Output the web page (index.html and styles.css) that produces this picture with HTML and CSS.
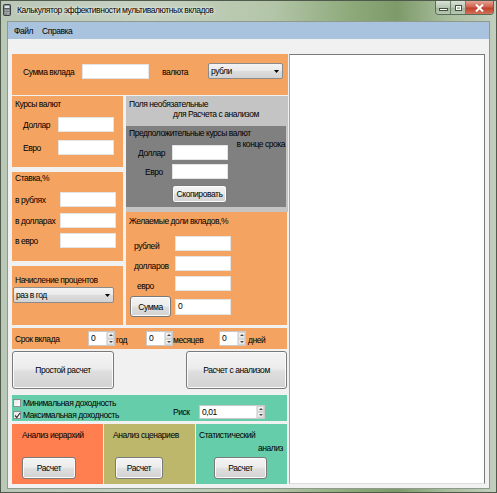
FILE: index.html
```html
<!DOCTYPE html>
<html lang="ru">
<head>
<meta charset="utf-8">
<title>Калькулятор эффективности мультивалютных вкладов</title>
<link rel="stylesheet" href="styles.css">
</head>
<body>
<div class="window">
  <div class="titlebar">
    <svg class="app-icon" width="8" height="12" viewBox="0 0 8 12">
      <rect x="0.5" y="0.5" width="7" height="11" rx="1" fill="#5b5f63" stroke="#3b3e41"/>
      <rect x="1.5" y="1.5" width="5" height="2.5" fill="#d9e2e6"/>
      <rect x="1.5" y="5.5" width="1.2" height="1.2" fill="#e8e8e8"/>
      <rect x="3.4" y="5.5" width="1.2" height="1.2" fill="#e8e8e8"/>
      <rect x="5.3" y="5.5" width="1.2" height="1.2" fill="#e8e8e8"/>
      <rect x="1.5" y="7.6" width="1.2" height="1.2" fill="#e8e8e8"/>
      <rect x="3.4" y="7.6" width="1.2" height="1.2" fill="#e8e8e8"/>
      <rect x="5.3" y="7.6" width="1.2" height="1.2" fill="#e8e8e8"/>
      <rect x="1.5" y="9.5" width="1.2" height="1" fill="#e8e8e8"/>
      <rect x="3.4" y="9.5" width="3.1" height="1" fill="#e8e8e8"/>
    </svg>
    <span class="title">Калькулятор эффективности мультивалютных вкладов</span>
    <div class="caption">
      <span class="cap-btn cap-min"><i></i></span>
      <span class="cap-btn cap-max"><i></i></span>
      <span class="cap-btn cap-close">
        <svg width="9" height="8" viewBox="0 0 9 8"><path d="M1 0.5 L8 7.5 M8 0.5 L1 7.5" stroke="#fff" stroke-width="2"/></svg>
      </span>
    </div>
  </div>
  <div class="frame">
    <div class="client">
      <div class="menubar">
        <span class="menu-item">Файл</span>
        <span class="menu-item">Справка</span>
      </div>
      <div class="content">
        <div class="left">
          <div class="panel sum-panel">
            <span class="lbl sum-lbl">Сумма вклада</span>
            <span class="tb sum-tb"></span>
            <span class="lbl cur-lbl">валюта</span>
            <span class="combo cur-combo">рубли<svg class="arrow" width="5" height="3" viewBox="0 0 5 3"><path d="M0 0H5L2.5 3Z" fill="#000"/></svg></span>
          </div>

          <div class="middle">
            <div class="col-a">
              <div class="panel kursy">
                <div class="ptitle">Курсы валют</div>
                <div class="row kursy-row first"><span class="lbl">Доллар</span><span class="tb w56"></span></div>
                <div class="row kursy-row"><span class="lbl">Евро</span><span class="tb w56"></span></div>
              </div>
              <div class="panel stavka">
                <div class="ptitle">Ставка,%</div>
                <div class="row stavka-row r1"><span class="lbl">в рублях</span><span class="tb w56"></span></div>
                <div class="row stavka-row r2"><span class="lbl">в долларах</span><span class="tb w56"></span></div>
                <div class="row stavka-row r3"><span class="lbl">в евро</span><span class="tb w56"></span></div>
              </div>
              <div class="panel nachisl">
                <div class="ptitle">Начисление процентов</div>
                <span class="combo nach-combo">раз в год<svg class="arrow" width="5" height="3" viewBox="0 0 5 3"><path d="M0 0H5L2.5 3Z" fill="#000"/></svg></span>
              </div>
            </div>
            <div class="col-b">
              <div class="optional">
                <div class="ptitle">Поля необязательные</div>
                <div class="ptitle opt-line2">для Расчета с анализом</div>
                <div class="dark">
                  <div class="ptitle">Предположительные курсы валют</div>
                  <div class="corner">в конце срока</div>
                  <div class="row dark-row"><span class="lbl dl-usd">Доллар</span><span class="tb w56"></span></div>
                  <div class="row dark-row r2"><span class="lbl dl-eur">Евро</span><span class="tb w56"></span></div>
                  <span class="btn copy-btn">Скопировать</span>
                </div>
              </div>
              <div class="panel shares">
                <div class="ptitle">Желаемые доли вкладов,%</div>
                <div class="row share-row first"><span class="lbl">рублей</span><span class="tb w56"></span></div>
                <div class="row share-row"><span class="lbl">долларов</span><span class="tb w56"></span></div>
                <div class="row share-row"><span class="lbl evro">евро</span><span class="tb w56"></span></div>
                <div class="row sum-row"><span class="btn sum-btn">Сумма</span><span class="tb w56 total">0</span></div>
              </div>
            </div>
          </div>

          <div class="panel srok">
            <span class="lbl srok-lbl">Срок вклада</span>
            <span class="nud n-small"><span class="val">0</span><span class="spin"><i class="up"></i><i class="down"></i></span></span>
            <span class="lbl god">год</span>
            <span class="nud n-small"><span class="val">0</span><span class="spin"><i class="up"></i><i class="down"></i></span></span>
            <span class="lbl mes">месяцев</span>
            <span class="nud n-small"><span class="val">0</span><span class="spin"><i class="up"></i><i class="down"></i></span></span>
            <span class="lbl dney">дней</span>
          </div>

          <div class="calc-row">
            <span class="btn big-btn b1">Простой расчет</span>
            <span class="btn big-btn b2">Расчет с анализом</span>
          </div>

          <div class="panel risk">
            <div class="checks">
              <div class="check-row"><span class="cb"></span><span class="lbl">Минимальная доходность</span></div>
              <div class="check-row"><span class="cb checked"><svg width="7" height="7" viewBox="0 0 7 7"><path d="M1 3.5 L2.8 5.5 L6 1" fill="none" stroke="#333" stroke-width="1.2"/></svg></span><span class="lbl">Максимальная доходность</span></div>
            </div>
            <div class="risk-ctl">
              <span class="lbl risk-lbl">Риск</span>
              <span class="nud n-risk"><span class="val">0,01</span><span class="spin"><i class="up"></i><i class="down"></i></span></span>
            </div>
          </div>

          <div class="methods">
            <div class="panel method coral">
              <div class="ptitle">Анализ иерархий</div>
              <span class="btn m-btn">Расчет</span>
            </div>
            <div class="panel method khaki">
              <div class="ptitle">Анализ сценариев</div>
              <span class="btn m-btn">Расчет</span>
            </div>
            <div class="panel method aqua">
              <div class="ptitle">Статистический</div>
              <div class="ptitle right">анализ</div>
              <span class="btn m-btn">Расчет</span>
            </div>
          </div>
        </div>
        <div class="output"></div>
      </div>
    </div>
  </div>
</div>
</body>
</html>
```

FILE: styles.css
```css
* { box-sizing: border-box; }

body {
  margin: 0;
  background: #ffffff;
  font-family: "Liberation Sans Narrow", "Liberation Sans", Arial, sans-serif;
  font-size: 8.5px;
  letter-spacing: -0.45px;
  color: #000;
}

.window {
  width: 497px;
  height: 493px;
  display: flex;
  flex-direction: column;
  overflow: hidden;
  border: 1px solid #4f5a4c;
  background: linear-gradient(90deg, #b9c7b6 0%, #c6d2c2 30%, #b3c5a8 55%, #8fab7c 70%, #7d9a69 80%, #a8bd9c 90%, #c2cebe 100%);
}

.titlebar {
  height: 19px;
  display: flex;
  align-items: flex-start;
  flex: none;
}

.app-icon { margin: 3px 0 0 2px; flex: none; }

.title {
  margin: 4px 0 0 6px;
  font-size: 8.5px;
  letter-spacing: -0.45px;
  line-height: 10px;
  white-space: nowrap;
  text-shadow: 0 0 4px rgba(255,255,255,0.9), 0 0 2px rgba(255,255,255,0.8);
}

.caption {
  margin-left: auto;
  margin-right: 2px;
  display: flex;
  height: 14px;
  border: 1px solid #5b6d5a;
  border-top: none;
  border-radius: 0 0 4px 4px;
  overflow: hidden;
}

.cap-btn {
  display: flex;
  align-items: center;
  justify-content: center;
  height: 100%;
}

.cap-min, .cap-max {
  width: 15px;
  background: linear-gradient(#d8e2d6, #b6c6b2 50%, #9eb39a 51%, #b7c8b2);
  border-right: 1px solid #6d7f6b;
}

.cap-min i {
  display: block;
  width: 7px;
  height: 1px;
  margin-top: 4px;
  background: #fff;
  border: 1px solid #44523f;
  box-sizing: content-box;
}

.cap-max i {
  display: block;
  width: 7px;
  height: 6px;
  border: 1px solid #44523f;
  box-shadow: inset 0 0 0 1px #fff;
}

.cap-close {
  width: 27px;
  background: linear-gradient(#e4a394, #d0634f 45%, #c2412b 55%, #d2735a);
}

.frame {
  flex: 1;
  display: flex;
  padding: 1px 6px 5px 6px;
}

.client {
  flex: 1;
  display: flex;
  flex-direction: column;
  background: #f1f1f1;
  border: 1px solid #8e9a8c;
}

.menubar {
  height: 17px;
  flex: none;
  background: #a9c2dd;
  display: flex;
  align-items: center;
  padding-left: 6px;
  gap: 9px;
}

.menu-item { line-height: 10px; }

.content {
  flex: 1;
  display: flex;
  gap: 1px;
  padding: 15px 4px 4px 4px;
}

.left {
  width: 276px;
  flex: none;
  display: flex;
  flex-direction: column;
}

.output {
  width: 196px;
  height: 430px;
  flex: none;
  background: #fff;
  border: 1px solid #7b7b7b;
  border-left-color: #a5a5a5;
  border-bottom-color: #dedede;
}

/* generic */
.panel { background: #f4a460; }
.lbl { line-height: 10px; white-space: nowrap; }
.ptitle { line-height: 10px; white-space: nowrap; }
.row { display: flex; align-items: center; }

.tb {
  display: block;
  height: 15px;
  background: #fff;
  border: 1px solid #e4e4e4;
  line-height: 13px;
  padding-left: 2px;
  flex: none;
}
.w56 { width: 56px; }

.combo {
  display: flex;
  align-items: center;
  justify-content: space-between;
  height: 16px;
  padding: 0 3px 0 2px;
  background: linear-gradient(#f3f3f3, #e9e9e9 50%, #dcdcdc 51%, #d3d3d3);
  border: 1px solid #8b8b8b;
  border-radius: 2px;
  line-height: 10px;
  flex: none;
}
.arrow { flex: none; }

.btn {
  display: flex;
  align-items: center;
  justify-content: center;
  line-height: 10px;
  background: linear-gradient(#f4f4f4, #ececec 45%, #dedede 55%, #d2d2d2);
  border: 1px solid #7a7a7a;
  border-radius: 3px;
  box-shadow: inset 0 0 0 1px #fbfbfb;
  white-space: nowrap;
  flex: none;
}

.nud {
  display: flex;
  height: 15px;
  background: #fff;
  border: 1px solid #c9c9c9;
  flex: none;
}
.nud .val { flex: 1; line-height: 13px; padding-left: 2px; }
.nud .spin {
  width: 8px;
  display: flex;
  flex-direction: column;
  border-left: 1px solid #e2e2e2;
}
.nud .spin i {
  flex: 1;
  display: flex;
  align-items: center;
  justify-content: center;
  background: linear-gradient(#f6f6f6, #e4e4e4);
  border: 1px solid #d4d4d4;
}
.nud .spin i::before {
  content: "";
  width: 0;
  height: 0;
  border-left: 2px solid transparent;
  border-right: 2px solid transparent;
}
.nud .spin i.up::before { border-bottom: 2px solid #4a4a4a; }
.nud .spin i.down::before { border-top: 2px solid #4a4a4a; }

/* top panel */
.sum-panel {
  height: 41px;
  display: flex;
  align-items: flex-start;
  padding: 9px 0 0 11px;
  margin-bottom: 1px;
  flex: none;
}
.sum-lbl { width: 59px; margin-top: 4px; }
.sum-tb { width: 67px; margin-top: 1px; }
.cur-lbl { width: 46px; margin: 4px 0 0 13px; }
.cur-combo { width: 75px; }

/* middle block */
.middle {
  height: 229px;
  display: flex;
  gap: 3px;
  flex: none;
}
.col-a {
  width: 111px;
  display: flex;
  flex-direction: column;
  gap: 5px;
}
.col-b {
  width: 162px;
  display: flex;
  flex-direction: column;
}

.kursy { height: 71px; padding: 3px 0 0 3px; }
.kursy-row { margin: 8px 0 0 8px; }
.kursy-row .lbl { width: 35px; }

.stavka { height: 89px; padding: 1px 0 0 3px; }
.stavka-row .lbl { width: 45px; }
.stavka-row.r1 { margin-top: 9px; }
.stavka-row.r2 { margin-top: 6px; }
.stavka-row.r3 { margin-top: 5px; }

.nachisl { height: 59px; padding: 9px 0 0 0; }
.nachisl .ptitle { padding-left: 3px; }
.nach-combo { width: 101px; margin: 2px 0 0 1px; }

.optional {
  height: 116px;
  background: #c4c4c4;
  padding-top: 3px;
}
.optional > .ptitle { padding-left: 3px; }
.optional > .opt-line2 { padding-left: 47px; }

.dark {
  width: 160px;
  height: 81px;
  margin-top: 7px;
  background: #808080;
  padding-top: 2px;
}
.dark .ptitle { padding-left: 3px; }
.corner {
  height: 6px;
  margin-top: 1px;
  line-height: 10px;
  text-align: right;
  padding-right: 1px;
  white-space: nowrap;
}
.dark-row .lbl { width: 46px; }
.dl-usd { padding-left: 12px; }
.dl-eur { padding-left: 19px; }
.dark-row.r2 { margin-top: 4px; }
.copy-btn { width: 55px; height: 18px; margin: 6px 0 0 46px; }

.shares { height: 113px; width: 161px; padding-top: 4px; }
.shares .ptitle { padding-left: 3px; }
.share-row { align-items: flex-end; margin-top: 5px; }
.share-row.first { margin-top: 10px; }
.share-row .lbl { width: 49px; padding-left: 8px; }
.share-row .lbl.evro { padding-left: 11px; }
.sum-row { margin-top: 5px; padding-left: 4px; gap: 4px; }
.sum-btn { width: 41px; height: 21px; }
.total { height: 16px; }

/* term row */
.srok {
  height: 21px;
  width: 275px;
  margin-top: 3px;
  display: flex;
  align-items: center;
  padding-left: 3px;
  flex: none;
}
.srok-lbl { width: 73px; }
.n-small { width: 27px; }
.god { width: 31px; padding-left: 1px; margin-top: 3px; }
.mes { width: 46px; margin-top: 3px; }
.dney { padding-left: 2px; margin-top: 3px; }

.calc-row {
  height: 38px;
  width: 275px;
  margin-top: 2px;
  display: flex;
  justify-content: space-between;
  flex: none;
}
.big-btn { height: 38px; }
.b1 { width: 102px; }
.b2 { width: 101px; }

.risk {
  height: 26px;
  width: 275px;
  margin-top: 6px;
  background: #66cdaa;
  display: flex;
  padding: 2px 0 0 1px;
  flex: none;
}
.checks { width: 160px; }
.check-row { height: 12px; display: flex; align-items: center; }
.cb {
  width: 8px;
  height: 8px;
  background: linear-gradient(135deg, #e6e6e6, #ffffff);
  border: 1px solid #8f8f8f;
  display: flex;
  align-items: center;
  justify-content: center;
  margin-right: 2px;
  flex: none;
}
.cb svg { flex: none; }
.risk-ctl {
  display: flex;
  align-items: center;
  align-self: flex-end;
  margin-bottom: 2px;
}
.risk-lbl { width: 26px; }
.n-risk { width: 66px; height: 14px; }
.n-risk .val { line-height: 12px; }

.methods {
  height: 60px;
  width: 275px;
  margin-top: 3px;
  display: flex;
  gap: 1px;
  flex: none;
}
.method {
  width: 91px;
  display: flex;
  flex-direction: column;
  padding-top: 6px;
}
.m-btn { height: 22px; margin-top: auto; margin-bottom: 5px; }
.coral { background: #ff7f50; }
.coral .ptitle { padding-left: 10px; }
.coral .m-btn { width: 54px; margin-left: 10px; }
.khaki { background: #bdb76b; }
.khaki .ptitle { padding-left: 9px; }
.khaki .m-btn { width: 48px; margin-left: 11px; }
.aqua { background: #66cdaa; }
.aqua .ptitle { padding-left: 3px; }
.aqua .ptitle.right { text-align: right; padding-right: 4px; margin-top: 3px; }
.aqua .m-btn { width: 53px; margin-left: 18px; }
```
